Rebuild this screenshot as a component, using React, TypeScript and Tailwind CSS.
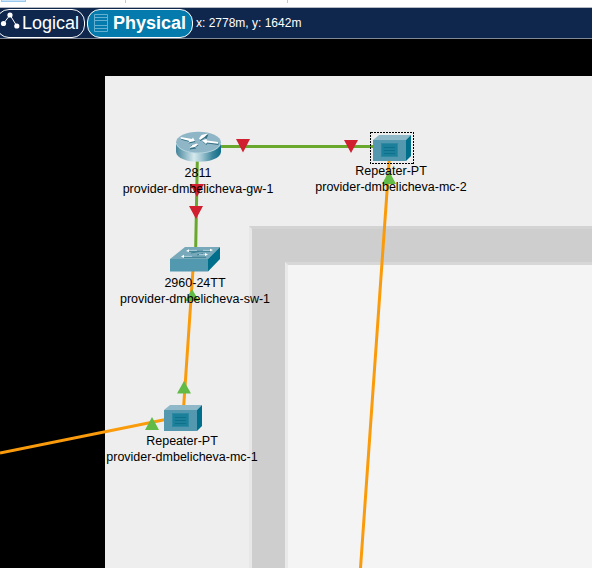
import React from "react";

type LabelProps = { title: string; name: string; place: string };

function DeviceLabel({ title, name, place }: LabelProps) {
  return (
    <div className={`absolute flex flex-col items-center whitespace-nowrap text-[12.5px] leading-[16px] text-black ${place}`}>
      <span>{title}</span>
      <span>{name}</span>
    </div>
  );
}

function Repeater({ x, y }: { x: number; y: number }) {
  return (
    <g transform={`translate(${x} ${y})`}>
      <path d="M0 5L6 0H38L33 5Z" fill="#8fb9c8" />
      <path d="M33 5L38 0V21L33 26Z" fill="#006f8c" />
      <rect y="5" width="33" height="21" fill="#5498af" />
      <rect x="8.5" y="8.5" width="16" height="13" fill="#1c809a" stroke="#2b89a1" />
      <path d="M11 12.5H22M11 15.5H22M11 18.5H22" stroke="#0e708a" strokeWidth="1" />
    </g>
  );
}

function Router() {
  return (
    <g>
      <path d="M176 143V152C177 165 220 165 221 152V143Z" fill="url(#routerSide)" />
      <ellipse cx="198.5" cy="142.5" rx="22.5" ry="10.8" fill="#8eb6c6" />
      <path d="M176.3 143C179 156.3 218 156.3 220.7 143" fill="none" stroke="#bfdbe4" strokeWidth="0.8" />
      <g transform="translate(.4 1.1)" fill="#356f83">
        <path d="M180.5 137L192 139L193 137.5L195 141L188 142.5L189.5 141L181 138.7Z" />
        <path d="M218 142L207 140.5L206.5 139L202 140.5L206 144L207 142.5L218 143.8Z" />
        <path d="M200 140L204.5 137L206 138L208 133.5L200.5 134.5L202.5 135.5L199 138.5Z" />
        <path d="M197 143.5L192.5 145L191 144L189.5 148.5L196 147.5L194.5 146.5L198 144.5Z" />
      </g>
      <g fill="#fff">
        <path d="M180.5 137L192 139L193 137.5L195 141L188 142.5L189.5 141L181 138.7Z" />
        <path d="M218 142L207 140.5L206.5 139L202 140.5L206 144L207 142.5L218 143.8Z" />
        <path d="M200 140L204.5 137L208 133.5L201.5 135L199 138.5Z" />
        <path d="M197 143.5L192.5 145L189.5 148L195 147L198 144.5Z" />
      </g>
    </g>
  );
}

function Switch() {
  return (
    <g>
      <path d="M170 259L185 247H220L208 259Z" fill="#77a9bb" />
      <path d="M208 259L220 247V259L208 271.5Z" fill="#006f8c" />
      <rect x="170" y="259" width="38" height="12.5" fill="#5298af" />
      <g stroke="#397d92" strokeWidth="1">
        <path d="M189 251.3H211M183 257.3H206M191 253L199 251.5M197 255L203 253.5" />
      </g>
      <g stroke="#b4d2dc" strokeWidth=".9">
        <path d="M189 250.4H197M203 250.4H210M183 256.4H192M199 254.4H205" />
      </g>
      <path d="M186 251L189 249.3V252ZM210 248.8L213 250L210 251.5ZM181 256.5L184 254.8V258ZM205 253L208 254.5L205 256Z" fill="#fff" />
    </g>
  );
}

function Network() {
  return (
    <svg className="absolute inset-0" width="592" height="529" viewBox="0 39 592 529">
      <defs>
        <linearGradient id="routerSide">
          <stop offset="0" stopColor="#45859b" />
          <stop offset=".4" stopColor="#d5e9ee" />
          <stop offset=".55" stopColor="#a9cbd6" />
          <stop offset=".82" stopColor="#38849b" />
          <stop offset="1" stopColor="#116d87" />
        </linearGradient>
      </defs>
      <g fill="none" strokeWidth="3">
        <path d="M200 146.5H390M197.5 150L195.5 258" stroke="#6aa82d" />
        <path d="M193.5 262L183 416L0 453M390 149L360.5 568" stroke="#fa9b0c" />
      </g>
      <g fill="#d01f2f">
        <path d="M236 139H250L243 152.5ZM344 140H358L351 153ZM190 184H204L197 197ZM189 206H203L196 219Z" />
      </g>
      <g fill="#62bb46">
        <path d="M185 301H199L192 289ZM177 393.5H191L184 381ZM145 430H159L152 417ZM382 184H396L389 171Z" />
      </g>
      <Router />
      <Switch />
      <Repeater x={164} y={405} />
      <Repeater x={373} y={135} />
      <rect x="370.5" y="132.5" width="43" height="31" fill="none" stroke="#000" strokeDasharray="2 1" shapeRendering="crispEdges" />
    </svg>
  );
}

export default function App() {
  return (
    <div className="flex h-[568px] w-[592px] flex-col overflow-hidden bg-black font-['Liberation_Sans',Arial,sans-serif]">
      <div className="flex h-[7px] shrink-0 bg-white">
        <div className="ml-px h-[2px] w-[25px] border-x border-b border-[#99c9ef] bg-[#cce4f7]" />
        <div className="ml-[99px] h-[3px] w-px bg-[#c8c8c8]" />
        <div className="ml-[161px] h-[3px] w-px bg-[#c8c8c8]" />
      </div>
      <header className="flex h-[32px] shrink-0 items-center border-y border-t-[#b6bac2] border-b-[#808895] bg-[#0f274d]">
        <button className="-ml-[4px] flex h-[29px] w-[89px] shrink-0 items-center rounded-[13px] border border-white text-[18px] text-white">
          <svg className="ml-[3px]" width="20" height="22" viewBox="0 0 20 22">
            <path d="M3.5 11.5L10 3L16.8 14" fill="none" stroke="#fff" strokeWidth="1" />
            <g fill="#fff"><circle cx="3.5" cy="11.5" r="2.6" /><circle cx="10" cy="3" r="2.6" /><circle cx="16.8" cy="14" r="2.6" /></g>
          </svg>
          <span className="ml-[2px]">Logical</span>
        </button>
        <button className="ml-[2px] flex h-[29px] w-[106px] shrink-0 items-center rounded-[13px] border border-white bg-[#047bac] text-[18px] font-bold text-white">
          <svg className="ml-[6px]" width="15" height="20" viewBox="0 0 15 20">
            <path d="M.5 1.5H13.5V18.5H.5ZM1 4.5H13M1 7.5H13M1 12.5H13M1 15.5H13" fill="none" stroke="#65afd0" />
          </svg>
          <span className="ml-[4px]">Physical</span>
        </button>
        <span className="ml-[3px] whitespace-nowrap text-[12px] text-white">x: 2778m, y: 1642m</span>
      </header>
      <main className="relative h-[529px] overflow-hidden bg-black pl-[105px] pt-[37px]">
        <div className="h-full bg-[#eee] pl-[144px] pt-[150px]">
          <div className="h-full border-l-[3px] border-t-[3px] border-l-[#e7e7e7] border-t-[#d3d3d3] bg-[#cecece] pl-[33px] pt-[33px]">
            <div className="h-full border-l-[3px] border-t-[3px] border-l-[#e9e9e9] border-t-[#d7d7d7] bg-[#f4f4f4]" />
          </div>
        </div>
        <Network />
        <DeviceLabel title="2811" name="provider-dmbelicheva-gw-1" place="left-[123px] top-[126px] w-[150px]" />
        <DeviceLabel title="Repeater-PT" name="provider-dmbelicheva-mc-2" place="left-[315px] top-[124px] w-[152px]" />
        <DeviceLabel title="2960-24TT" name="provider-dmbelicheva-sw-1" place="left-[120px] top-[236px] w-[150px]" />
        <DeviceLabel title="Repeater-PT" name="provider-dmbelicheva-mc-1" place="left-[106px] top-[394px] w-[152px]" />
      </main>
    </div>
  );
}
